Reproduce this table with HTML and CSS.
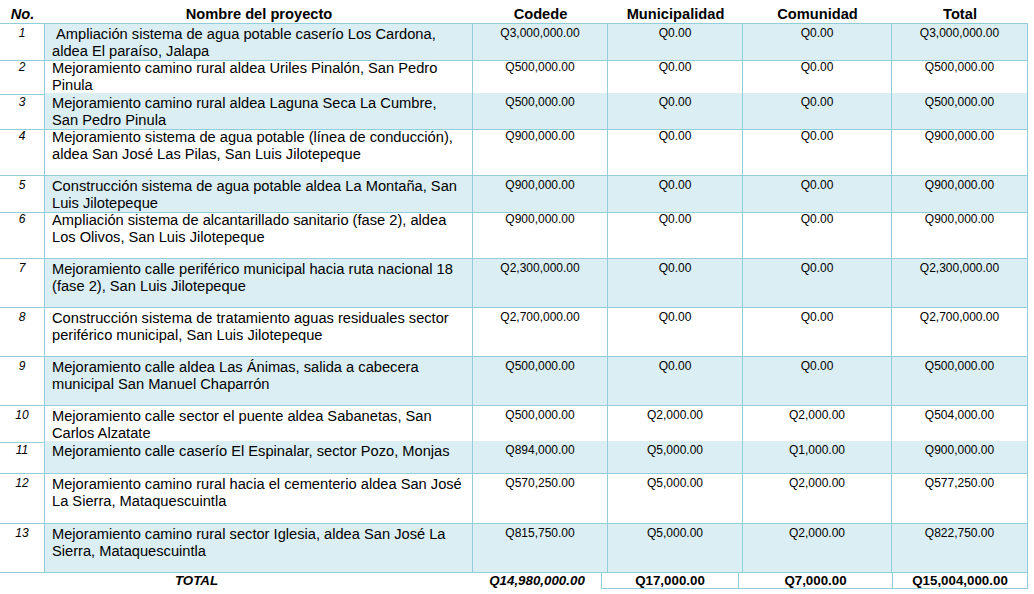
FILE: index.html
```html
<!DOCTYPE html>
<html lang="es">
<head>
<meta charset="utf-8">
<title>Proyectos</title>
<link rel="stylesheet" href="styles.css">
</head>
<body>
<div class="table">
  <div class="row head">
    <div class="h hno">No.</div>
    <div class="h">Nombre del proyecto</div>
    <div class="h">Codede</div>
    <div class="h">Municipalidad</div>
    <div class="h">Comunidad</div>
    <div class="h">Total</div>
  </div>

  <div class="row h34 alt">
    <div class="num">1</div>
    <div class="name">&nbsp;Ampliación sistema de agua potable caserío Los Cardona,<br>aldea El paraíso, Jalapa</div>
    <div class="amt">Q3,000,000.00</div>
    <div class="amt">Q0.00</div>
    <div class="amt">Q0.00</div>
    <div class="amt">Q3,000,000.00</div>
  </div>

  <div class="row h35">
    <div class="num">2</div>
    <div class="name">Mejoramiento camino rural aldea Uriles Pinalón, San Pedro<br>Pinula</div>
    <div class="amt">Q500,000.00</div>
    <div class="amt">Q0.00</div>
    <div class="amt">Q0.00</div>
    <div class="amt">Q500,000.00</div>
  </div>

  <div class="row h34 alt">
    <div class="num">3</div>
    <div class="name">Mejoramiento camino rural aldea Laguna Seca La Cumbre,<br>San Pedro Pinula</div>
    <div class="amt">Q500,000.00</div>
    <div class="amt">Q0.00</div>
    <div class="amt">Q0.00</div>
    <div class="amt">Q500,000.00</div>
  </div>

  <div class="row h49">
    <div class="num">4</div>
    <div class="name">Mejoramiento sistema de agua potable (línea de conducción),<br>aldea San José Las Pilas, San Luis Jilotepeque</div>
    <div class="amt">Q900,000.00</div>
    <div class="amt">Q0.00</div>
    <div class="amt">Q0.00</div>
    <div class="amt">Q900,000.00</div>
  </div>

  <div class="row h34 alt">
    <div class="num">5</div>
    <div class="name">Construcción sistema de agua potable aldea La Montaña, San<br>Luis Jilotepeque</div>
    <div class="amt">Q900,000.00</div>
    <div class="amt">Q0.00</div>
    <div class="amt">Q0.00</div>
    <div class="amt">Q900,000.00</div>
  </div>

  <div class="row h49">
    <div class="num">6</div>
    <div class="name">Ampliación sistema de alcantarillado sanitario (fase 2), aldea<br>Los Olivos, San Luis Jilotepeque</div>
    <div class="amt">Q900,000.00</div>
    <div class="amt">Q0.00</div>
    <div class="amt">Q0.00</div>
    <div class="amt">Q900,000.00</div>
  </div>

  <div class="row h49 alt">
    <div class="num">7</div>
    <div class="name">Mejoramiento calle periférico municipal hacia ruta nacional 18<br>(fase 2), San Luis Jilotepeque</div>
    <div class="amt">Q2,300,000.00</div>
    <div class="amt">Q0.00</div>
    <div class="amt">Q0.00</div>
    <div class="amt">Q2,300,000.00</div>
  </div>

  <div class="row h49">
    <div class="num">8</div>
    <div class="name">Construcción sistema de tratamiento aguas residuales sector<br>periférico municipal, San Luis Jilotepeque</div>
    <div class="amt">Q2,700,000.00</div>
    <div class="amt">Q0.00</div>
    <div class="amt">Q0.00</div>
    <div class="amt">Q2,700,000.00</div>
  </div>

  <div class="row h49 alt">
    <div class="num">9</div>
    <div class="name">Mejoramiento calle aldea Las Ánimas, salida a cabecera<br>municipal San Manuel Chaparrón</div>
    <div class="amt">Q500,000.00</div>
    <div class="amt">Q0.00</div>
    <div class="amt">Q0.00</div>
    <div class="amt">Q500,000.00</div>
  </div>

  <div class="row h35">
    <div class="num">10</div>
    <div class="name">Mejoramiento calle sector el puente aldea Sabanetas, San<br>Carlos Alzatate</div>
    <div class="amt">Q500,000.00</div>
    <div class="amt">Q2,000.00</div>
    <div class="amt">Q2,000.00</div>
    <div class="amt">Q504,000.00</div>
  </div>

  <div class="row h33 alt">
    <div class="num">11</div>
    <div class="name">Mejoramiento calle caserío El Espinalar, sector Pozo, Monjas</div>
    <div class="amt">Q894,000.00</div>
    <div class="amt">Q5,000.00</div>
    <div class="amt">Q1,000.00</div>
    <div class="amt">Q900,000.00</div>
  </div>

  <div class="row h50">
    <div class="num">12</div>
    <div class="name">Mejoramiento camino rural hacia el cementerio aldea San José<br>La Sierra, Mataquescuintla</div>
    <div class="amt">Q570,250.00</div>
    <div class="amt">Q5,000.00</div>
    <div class="amt">Q2,000.00</div>
    <div class="amt">Q577,250.00</div>
  </div>

  <div class="row h49 alt">
    <div class="num">13</div>
    <div class="name">Mejoramiento camino rural sector Iglesia, aldea San José La<br>Sierra, Mataquescuintla</div>
    <div class="amt">Q815,750.00</div>
    <div class="amt">Q5,000.00</div>
    <div class="amt">Q2,000.00</div>
    <div class="amt">Q822,750.00</div>
  </div>

  <div class="totals">
    <div class="t-label">TOTAL</div>
    <div class="t-codede">Q14,980,000.00</div>
    <div class="t-cell t-first">Q17,000.00</div>
    <div class="t-cell">Q7,000.00</div>
    <div class="t-cell">Q15,004,000.00</div>
  </div>
</div>
</body>
</html>
```

FILE: styles.css
```css
* { box-sizing: border-box; }

html, body {
  margin: 0;
  padding: 0;
  background: #ffffff;
}

body {
  font-family: "Liberation Sans", Arial, sans-serif;
  color: #000000;
  width: 1034px;
  height: 594px;
  overflow: hidden;
}

.table {
  width: 1028px;
}

.row {
  display: grid;
  grid-template-columns: 45px 428px 135px 135px 149px 136px;
}

.head { height: 24px; }
.h33 { height: 33px; }
.h34 { height: 34px; }
.h35 { height: 35px; }
.h49 { height: 49px; }
.h50 { height: 50px; }

.row > div {
  border-bottom: 1px solid #92cddc;
}

.h {
  font-weight: bold;
  font-size: 14.67px;
  line-height: 17px;
  text-align: center;
  padding-top: 6px;
}

.hno { font-style: italic; }

.num,
.name,
.amt {
  border-right: 1px solid #92cddc;
}

.num {
  font-style: italic;
  font-size: 12px;
  line-height: 14px;
  text-align: center;
  padding-top: 2px;
}

.name {
  font-size: 14.67px;
  line-height: 17px;
  padding: 2px 0 0 7px;
  white-space: nowrap;
}

.amt {
  font-size: 12px;
  line-height: 14px;
  text-align: center;
  padding-top: 2px;
}

.alt > .name,
.alt > .amt {
  background: #daeef3;
}

.totals {
  display: grid;
  grid-template-columns: 473px 128px 138px 154px 135px;
  height: 16px;
  font-weight: bold;
  font-size: 13.33px;
  line-height: 15px;
}

.t-label,
.t-codede {
  font-style: italic;
  text-align: center;
}

.t-label {
  padding-right: 80px;
}

.t-cell {
  text-align: center;
  border-right: 1px solid #92cddc;
  border-bottom: 1px solid #92cddc;
}

.t-first {
  border-left: 1px solid #92cddc;
}
```
